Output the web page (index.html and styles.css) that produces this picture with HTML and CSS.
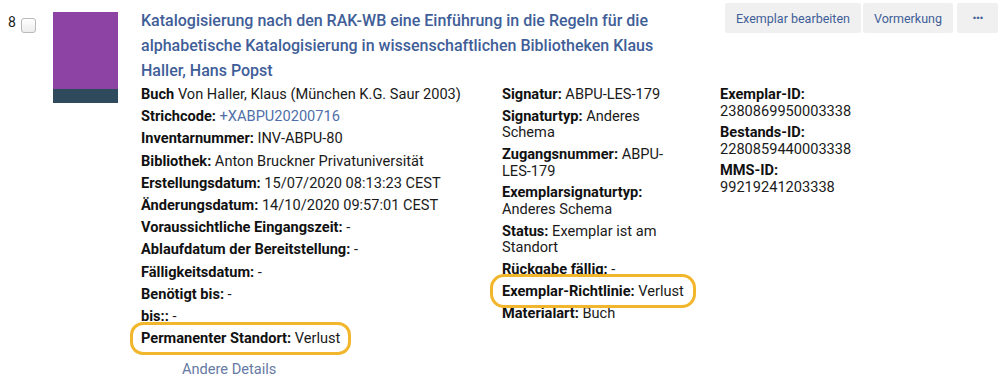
FILE: index.html
```html
<!DOCTYPE html>
<html lang="de">
<head>
    <meta charset="UTF-8">
    <meta name="viewport" content="width=device-width, initial-scale=1.0">
    <title>Suchergebnis</title>
    <link rel="stylesheet" href="styles.css">
</head>
<body>
    <div class="result">
        <div class="index">
            <span class="num">8</span>
            <span class="check"></span>
        </div>
        <div class="thumb">
            <div class="band"></div>
        </div>
        <div class="content">
            <div class="head">
                <a class="title" href="#">Katalogisierung nach den RAK-WB eine Einführung in die Regeln für die alphabetische Katalogisierung in wissenschaftlichen Bibliotheken Klaus Haller, Hans Popst</a>
                <div class="actions">
                    <button class="btn">Exemplar bearbeiten</button>
                    <button class="btn">Vormerkung</button>
                    <button class="btn more-btn">&middot;&middot;&middot;</button>
                </div>
            </div>
            <div class="details">
                <ul class="col">
                    <li><b>Buch</b> Von Haller, Klaus (München K.G. Saur 2003)</li>
                    <li><b>Strichcode:</b> <a class="link" href="#">+XABPU20200716</a></li>
                    <li><b>Inventarnummer:</b> INV-ABPU-80</li>
                    <li><b>Bibliothek:</b> Anton Bruckner Privatuniversität</li>
                    <li><b>Erstellungsdatum:</b> 15/07/2020 08:13:23 CEST</li>
                    <li><b>Änderungsdatum:</b> 14/10/2020 09:57:01 CEST</li>
                    <li><b>Voraussichtliche Eingangszeit:</b> -</li>
                    <li><b>Ablaufdatum der Bereitstellung:</b> -</li>
                    <li><b>Fälligkeitsdatum:</b> -</li>
                    <li><b>Benötigt bis:</b> -</li>
                    <li><b>bis::</b> -</li>
                    <li class="mark"><b>Permanenter Standort:</b> Verlust</li>
                    <li class="other"><a href="#">Andere Details</a></li>
                </ul>
                <ul class="col item">
                    <li><b>Signatur:</b> ABPU-LES-179</li>
                    <li><b>Signaturtyp:</b> Anderes Schema</li>
                    <li><b>Zugangsnummer:</b> ABPU-LES-179</li>
                    <li><b>Exemplarsignaturtyp:</b> Anderes Schema</li>
                    <li><b>Status:</b> Exemplar ist am Standort</li>
                    <li><b>Rückgabe fällig:</b> -</li>
                    <li class="mark"><b>Exemplar-Richtlinie:</b> Verlust</li>
                    <li><b>Materialart:</b> Buch</li>
                </ul>
                <ul class="col ids">
                    <li><b>Exemplar-ID:</b> 2380869950003338</li>
                    <li><b>Bestands-ID:</b> 2280859440003338</li>
                    <li><b>MMS-ID:</b> 99219241203338</li>
                </ul>
            </div>
        </div>
    </div>
</body>
</html>
```

FILE: styles.css
```css
body{
    margin:0;
    background-color:#ffffff;
    font-family:Roboto, "Liberation Sans", sans-serif;
    color:#1a1a1a;
}

.result{
    display:flex;
    padding:3px 2px 0 8px;
}

.index{
    display:flex;
    align-items:flex-start;
    width:45px;
    flex-shrink:0;
}
.num{
    font-size:14px;
    line-height:16px;
    margin-top:11px;
}
.check{
    width:13px;
    height:13px;
    margin:15px 0 0 5px;
    border:1px solid #b9b9b9;
    border-radius:3px;
    background:linear-gradient(#ffffff, #ececec);
}

.thumb{
    width:65px;
    height:91px;
    margin-top:9px;
    background-color:#8c43a4;
    display:flex;
    flex-direction:column;
    justify-content:flex-end;
    flex-shrink:0;
}
.band{
    height:14px;
    background-color:#2f4a5c;
}

.content{
    flex:1;
    margin-left:23px;
}

.head{
    display:flex;
    justify-content:space-between;
    align-items:flex-start;
}
.title{
    width:545px;
    padding-top:5px;
    font-size:16px;
    font-weight:500;
    line-height:25px;
    color:#3f5e98;
    text-decoration:none;
}
.actions{
    display:flex;
    gap:2px;
}
.btn{
    height:30px;
    border:none;
    border-radius:2px;
    background-color:#f0f0f0;
    color:#3f5e98;
    font-family:Roboto, "Liberation Sans", sans-serif;
    font-size:12.5px;
    padding:0 11px;
}
.more-btn{
    width:41px;
    font-weight:900;
    font-size:14px;
    letter-spacing:-1px;
    margin-left:2px;
}

.details{
    display:grid;
    grid-template-columns:331px 188px 150px;
    column-gap:30px;
    margin-top:3px;
}
.col{
    margin:0;
    padding:0;
    list-style:none;
    font-size:14.6px;
    line-height:17px;
}
.col li{
    margin-bottom:5.2px;
}
.item{
    line-height:16.5px;
}
.item li{
    margin-bottom:5.3px;
}
.col b{
    font-weight:700;
    color:#111111;
}
.ids li{
    margin-bottom:4px;
}
.ids b{
    display:block;
}
.link{
    color:#4f6faa;
    text-decoration:none;
}
.mark{
    width:fit-content;
    padding:0 3px;
    margin-left:-3px;
    outline:3px solid #f2b62c;
    outline-offset:5px;
    border-radius:5px;
}
.item .mark{
    outline-offset:6px;
}
.other{
    margin-top:14px;
    margin-left:41px;
}
.other a{
    color:#667aa3;
    text-decoration:none;
}
```
